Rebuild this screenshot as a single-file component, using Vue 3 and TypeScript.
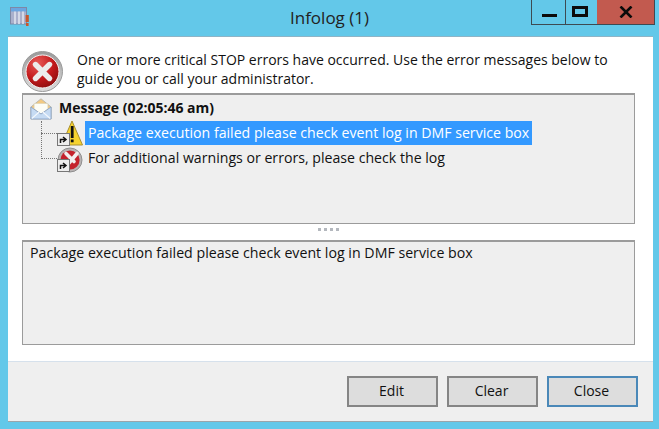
<script setup lang="ts">
const rows = [
  { text: 'Package execution failed please check event log in DMF service box', selected: true, kind: 'warn' },
  { text: 'For additional warnings or errors, please check the log', selected: false, kind: 'err' },
]
</script>

<template>
  <div class="window">
    <header class="titlebar">
      <div class="appicon">
        <svg width="20" height="20" viewBox="0 0 20 20">
          <rect x=".5" y=".5" width="16" height="16.5" fill="#aab0cc" stroke="#7d88a6" stroke-width="1" />
          <rect x="1" y="1" width="15" height="3.5" fill="#6ba6e0" />
          <path d="M5 4.5V17M9 4.5V17M13 4.5V17" stroke="#dfe3ee" stroke-width="1.6" />
          <rect x="15.6" y="8" width="3.2" height="7" fill="#c8562c" />
          <rect x="16" y="16" width="2.6" height="3" fill="#c8562c" />
        </svg>
      </div>
      <div class="title">Infolog (1)</div>
      <div class="caption">
        <div class="cbtn min"><span></span></div>
        <div class="cbtn max"><span></span></div>
        <div class="cbtn close">
          <svg width="14" height="12" viewBox="0 0 14 12"><path d="M1.5 0.5 12.5 11.5M12.5 0.5 1.5 11.5" stroke="#0b0b0b" stroke-width="2.6" /></svg>
        </div>
      </div>
    </header>

    <main class="client">
      <section class="body">
        <div class="notice">
          <svg class="stop" width="42" height="42" viewBox="0 0 42 42">
            <defs>
              <radialGradient id="red" cx="35%" cy="25%" r="80%">
                <stop offset="0%" stop-color="#e85a58" />
                <stop offset="60%" stop-color="#c21a1c" />
                <stop offset="100%" stop-color="#8e0f10" />
              </radialGradient>
              <linearGradient id="ring" x1="0" y1="0" x2="0" y2="1">
                <stop offset="0%" stop-color="#9a9a9a" />
                <stop offset="100%" stop-color="#dedede" />
              </linearGradient>
            </defs>
            <circle cx="20.5" cy="20.5" r="20" fill="url(#ring)" stroke="#9a9a9a" />
            <circle cx="20.5" cy="20.5" r="16.5" fill="url(#red)" stroke="#f4f4f4" stroke-width="1" />
            <path d="M13.5 13.5 27.5 27.5M27.5 13.5 13.5 27.5" stroke="#ececec" stroke-width="5.4" stroke-linecap="round" />
          </svg>
          <p>One or more critical STOP errors have occurred. Use the error messages below to guide you or call your administrator.</p>
        </div>

        <div class="pane tree">
          <div class="head">
            <svg class="env" width="22" height="22" viewBox="0 0 24 22" preserveAspectRatio="none">
              <path d="M1 9 12 .8 23 9v12H1z" fill="#f3c981" stroke="#b9b7ae" />
              <path d="M4.5 11V5.5h15V11l-7.5 5z" fill="#fdfdf6" stroke="#d8d2b4" stroke-width=".6" />
              <path d="M1 9v12h22V9L12 16z" fill="#c6dbf3" stroke="#8fa7c9" />
              <path d="M2 20.5 10 14M22 20.5 14 14" stroke="#f4f8fd" stroke-width="1.2" />
            </svg>
            <strong>Message (02:05:46 am)</strong>
          </div>
          <div class="guide"></div>
          <div v-for="row in rows" :key="row.kind" class="row" :class="row.kind">
            <span class="dots"></span>
            <span class="ico">
              <svg v-if="row.kind === 'warn'" class="glyph" width="27" height="27" viewBox="0 0 27 27">
                <path d="M15 1 25.5 25h-21z" fill="#f6d32e" stroke="#a98f30" stroke-linejoin="round" />
                <path d="M15.2 6v12" stroke="#111" stroke-width="2.8" />
                <rect x="13.8" y="19.5" width="2.8" height="2.8" fill="#111" />
              </svg>
              <svg v-else class="glyph" width="27" height="27" viewBox="0 0 27 27">
                <circle cx="13" cy="13" r="12" fill="#b9b4b4" stroke="#8f8f8f" stroke-width="1" />
                <circle cx="13" cy="13" r="9.6" fill="#c4222c" />
                <path d="M9 6.5 17 14.5M20 6.5 12 16" stroke="#f2eeee" stroke-width="3.6" stroke-linecap="round" />
              </svg>
              <svg class="shortcut" width="13" height="13" viewBox="0 0 13 13">
                <rect x=".5" y=".5" width="12" height="12" fill="#eee" stroke="#777" />
                <path d="M3.5 10V6.5H8M6 4l3 2.5L6 9" fill="none" stroke="#111" stroke-width="1.5" />
              </svg>
            </span>
            <span class="label" :class="{ selected: row.selected }">{{ row.text }}</span>
          </div>
        </div>

        <div class="splitter"><i></i><i></i><i></i><i></i></div>

        <div class="pane detail">Package execution failed please check event log in DMF service box</div>
      </section>

      <footer class="footer">
        <button class="btn">Edit</button>
        <button class="btn">Clear</button>
        <button class="btn default">Close</button>
      </footer>
    </main>
  </div>
</template>

<style>
html, body { margin: 0; background: #63c8e9; }
</style>

<style scoped>
.window {
  width: 659px;
  height: 429px;
  box-sizing: border-box;
  padding: 0 6px 8px 8px;
  display: flex;
  flex-direction: column;
  background: #63c8e9;
  font-family: "Open Sans", "Noto Sans", sans-serif;
  font-size: 14px;
  color: #111;
  overflow: hidden;
}
.titlebar {
  height: 37px;
  flex: none;
  display: flex;
  position: relative;
  align-items: flex-start;
}
.appicon { margin: 7px 0 0 2px; height: 20px; }
.title {
  position: absolute;
  left: 0;
  right: 2px;
  top: 8px;
  text-align: center;
  font-size: 17px;
  line-height: 20px;
  color: #222;
}
.caption {
  position: absolute;
  right: -2px;
  top: 0;
  height: 25px;
  display: flex;
  box-sizing: border-box;
  border: 1px solid #3d4a52;
  border-top: 0;
}
.cbtn {
  height: 24px;
  display: flex;
  align-items: center;
  justify-content: center;
  box-sizing: border-box;
}
.min { width: 34px; border-right: 1px solid #3d4a52; }
.min span { width: 15px; height: 3px; background: #0b0b0b; margin: 6px 0 0 2px; }
.max { width: 31px; }
.max span { border: 3px solid #0b0b0b; width: 10px; height: 5px; margin: -2px 3px 0 0; }
.close { width: 57px; background: #c25a4f; }
.close svg { margin-bottom: 1px; }
.client {
  flex: 1;
  background: #fff;
  display: flex;
  flex-direction: column;
  box-shadow: 0 -1px 0 #8fb4c6;
  min-height: 0;
}
.body {
  flex: 1;
  padding: 0 18px 0 14px;
  min-height: 0;
  display: flex;
  flex-direction: column;
}
.notice {
  height: 56px;
  flex: none;
  display: flex;
  position: relative;
}
.stop { position: absolute; left: 0; top: 14px; }
.notice p {
  margin: 13px 0 0 55px;
  line-height: 19px;
  width: 545px;
}
.pane {
  background: #efefef;
  border: 1px solid #9b9b9b;
  border-top-width: 2px;
  box-sizing: border-box;
}
.tree { height: 131px; padding: 3px 0 0 7px; position: relative; flex: none; }
.head { display: flex; align-items: center; height: 22px; }
.env { margin-right: 7px; flex: none; }
.head strong { font-weight: 700; font-size: 14px; margin-bottom: 3px; }
.guide {
  position: absolute;
  left: 18px;
  top: 26px;
  height: 38px;
  border-left: 1px dotted #777;
}
.row { display: flex; align-items: center; height: 25px; position: relative; margin-left: 11px; }
.dots { width: 16px; border-top: 1px dotted #777; flex: none; margin-top: 1px; }
.ico { width: 26px; height: 25px; flex: none; position: relative; margin-right: 2px; }
.glyph { position: absolute; left: 0; top: 0; }
.err .glyph { top: 2px; }
.shortcut { position: absolute; left: 0; bottom: -1px; }
.err .shortcut { bottom: -2px; }
.label { padding: 0 3px; height: 24px; line-height: 24px; white-space: nowrap; font-size: 14.15px; }
.label.selected { background: #3399ff; color: #fff; }
.splitter {
  height: 16px;
  flex: none;
  display: flex;
  justify-content: center;
  align-items: center;
  gap: 3px;
  padding-bottom: 6px;
  box-sizing: border-box;
}
.splitter i { width: 3px; height: 3px; background: #b4b8be; }
.detail { height: 105px; padding: 0 7px; flex: none; line-height: 22px; white-space: nowrap; font-size: 14.2px; }
.footer {
  height: 60px;
  flex: none;
  background: #efefef;
  border-top: 1px solid #d6e1ec;
  box-sizing: border-box;
  display: flex;
  justify-content: flex-end;
  gap: 9px;
  padding: 14px 15px 0 0;
  box-shadow: 0 1px 0 #9aa5aa;
}
.btn {
  width: 91px;
  height: 31px;
  background: #dddddd;
  border: 2px solid #858585;
  font: inherit;
  color: #111;
  padding: 0 2px 2px 0;
}
.btn.default { border-color: #4a88b8; }
</style>
